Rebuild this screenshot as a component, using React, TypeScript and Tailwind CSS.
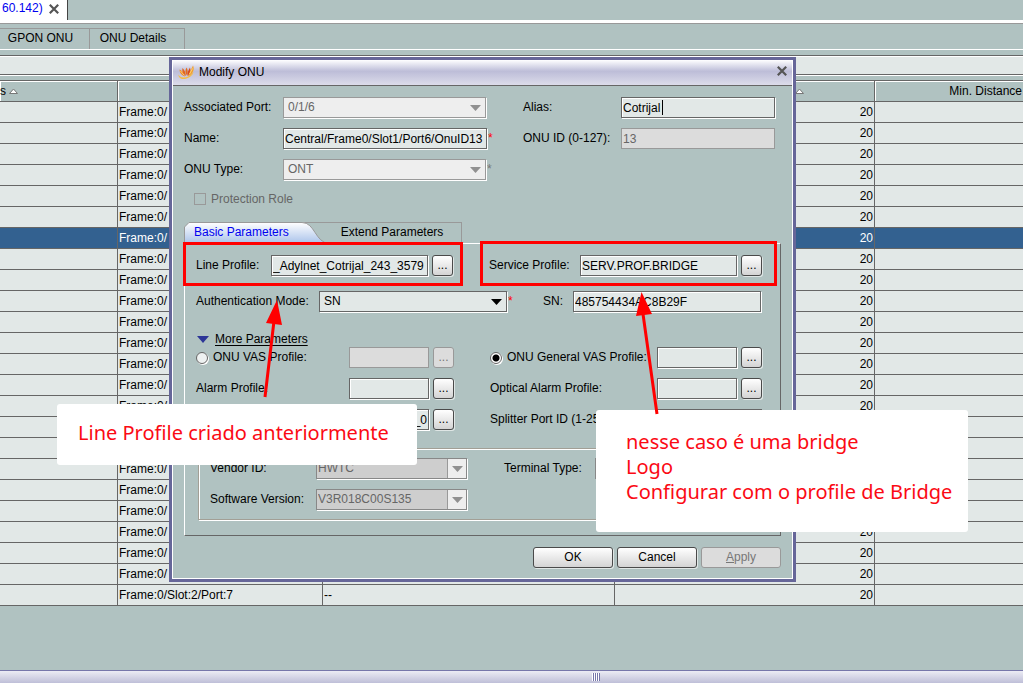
import { useEffect, useId, useRef, type ReactNode } from "react";

const field =
  "h-[21px] border border-[#666] bg-[#e2e8e7] px-px text-[12px] leading-[15px] text-black outline-none shadow-[inset_1px_1px_0_#fff,1px_1px_0_#fff]";
const fieldOff =
  "h-[21px] border border-[#999] bg-[#dcdcdc] px-px text-[12px] leading-[15px] text-[#666] outline-none";
const buttonOn =
  "rounded-[3px] border border-[#4a4a4a] bg-linear-to-b from-white to-[#d4d4d4] text-black shadow-[1px_1px_0_#dfe6e5]";
const buttonOff = "rounded-[3px] border border-[#999] bg-[#dcdcdc] text-[#777]";

type FieldProps = {
  label: ReactNode;
  labelWidth: string;
  width: string;
  value?: string;
  disabled?: boolean;
  caret?: boolean;
  required?: boolean;
  browse?: boolean;
};

function TextField({ label, labelWidth, width, value = "", disabled, caret, required, browse }: FieldProps) {
  const id = useId();
  const ref = useRef<HTMLInputElement>(null);
  useEffect(() => {
    if (ref.current) ref.current.scrollLeft = ref.current.scrollWidth;
  }, []);
  return (
    <div className="flex items-center">
      <label htmlFor={id} className={`${labelWidth} shrink-0 whitespace-nowrap`}>
        {label}
      </label>
      <div className="relative flex">
        <input
          ref={ref}
          id={id}
          defaultValue={value}
          disabled={disabled}
          className={`${width} ${disabled ? fieldOff : field}`}
        />
        {caret && <span className="absolute top-[3px] left-[41px] h-[15px] w-px bg-black" />}
      </div>
      {required && <Star />}
      {browse && <Browse disabled={disabled} />}
    </div>
  );
}

function Star({ muted }: { muted?: boolean }) {
  return <span className={`ml-px h-[15px] ${muted ? "text-[#777]" : "text-[#f00]"}`}>*</span>;
}

function Browse({ disabled }: { disabled?: boolean }) {
  return (
    <button
      aria-label="Browse"
      disabled={disabled}
      className={`ml-1 flex h-[21px] w-[21px] items-center justify-center text-[12px] leading-[15px] ${disabled ? buttonOff : buttonOn}`}
    >
      ...
    </button>
  );
}

type SelectProps = {
  label: string;
  labelWidth: string;
  width: string;
  value: string;
  look: "active" | "disabled" | "combo";
  star?: "red" | "gray";
};

function SelectField({ label, labelWidth, width, value, look, star }: SelectProps) {
  const id = useId();
  const tone =
    look === "active"
      ? "border-[#666] bg-[#e2e8e7] pl-1 text-black"
      : look === "combo"
        ? "border-[#888] bg-[#cecece] pl-px text-[#666]"
        : "border-[#999] bg-[#eee] pl-1 text-[#666]";
  return (
    <div className="flex items-center">
      <label htmlFor={id} className={`${labelWidth} shrink-0 whitespace-nowrap`}>
        {label}
      </label>
      <div className="relative flex">
        <select
          id={id}
          disabled={look !== "active"}
          className={`h-[21px] appearance-none border text-[12px] leading-[15px] opacity-100 shadow-[1px_1px_0_#fff] outline-none ${width} ${tone}`}
        >
          <option>{value}</option>
        </select>
        <span
          className={`pointer-events-none absolute top-px right-px flex h-[19px] w-[19px] items-center justify-center ${
            look === "combo" ? "border-l border-[#999] bg-[#eee]" : ""
          }`}
        >
          <svg width="11" height="6" viewBox="0 0 11 6" className={look === "active" ? "fill-black" : "fill-[#909090]"}>
            <path d="M0 0h11L5.5 6z" />
          </svg>
        </span>
      </div>
      {star && <Star muted={star === "gray"} />}
    </div>
  );
}

function Radio({ label, checked }: { label: string; checked?: boolean }) {
  return (
    <span className="flex items-center gap-[5px] whitespace-nowrap">
      <input
        type="radio"
        name="vas"
        aria-label={label}
        defaultChecked={checked}
        className="h-3 w-3 appearance-none rounded-full border border-[#666] bg-[#eef1f1] shadow-[1px_1px_0_#fff] checked:bg-[radial-gradient(circle,#000_0_3px,#fff_4px)]"
      />
      {label}
    </span>
  );
}

function CloseIcon() {
  return (
    <svg width="10" height="10" viewBox="0 0 10 10" className="stroke-[#555]" strokeWidth="2.2">
      <path d="M.8.8l8.4 8.4M9.2.8L.8 9.2" />
    </svg>
  );
}

function SortIcon() {
  return (
    <svg width="9" height="6" viewBox="0 0 9 6" className="inline-block fill-white stroke-[#777]">
      <path d="M.5 5.5h8L4.5 1z" />
    </svg>
  );
}

function FlameIcon() {
  return (
    <svg width="17" height="15" viewBox="0 0 17 15">
      <path d="M.5 9.500C0 13 4 15 8.500 13.500 12 12.500 15 10 15.500 7c-3 4-6.500 5.500-10 5.500-2.500 0-4-1-5-3z" fill="#f5bd45" />
      <path d="M15 .5c2 4-.5 9-5 11 .5-4 3-6 5-11z" fill="#f2a02e" />
      <path d="M1.500 4.500C4 5.500 6 8 7 11.500 4 10.500 1.500 8 1.500 4.500z" fill="#ee8a26" />
      <path d="M4.500 3c1.500 1.500 2.500 3 3 5.500L8 11 5 8.500C4.500 6.500 4 5 4.500 3z" fill="#e2641f" />
      <path d="M8.500 2.500c1.500 2 1.500 5 .5 8C7 8 7 5 8.500 2.500z" fill="#e56b1c" />
      <path d="M12 2.500c1 3 0 6-2.500 8.500C9 8 10.500 5 12 2.500z" fill="#d8481a" />
      <path d="M2.500 6l3.500 4M14.500 3.500L11.500 9" stroke="#ffdf8a" strokeWidth=".8" />
    </svg>
  );
}

function OnuTable() {
  const rows = Array.from({ length: 24 }, (_, i) => i);
  const cell = "h-[21px] overflow-hidden border-r border-b border-[#666] p-0 whitespace-nowrap leading-[15px]";
  const head = "h-[22px] border-t border-r border-b border-[#666] p-0 font-normal leading-[15px] shadow-[inset_1px_1px_0_#fff]";
  return (
    <table className="w-full table-fixed border-separate border-spacing-0">
      <colgroup>
        <col className="w-[118px]" />
        <col className="w-[205px]" />
        <col className="w-[292px]" />
        <col className="w-[260px]" />
        <col />
      </colgroup>
      <thead>
        <tr>
          <th className={`${head} text-left`}>
            s <SortIcon />
          </th>
          <th className={head} />
          <th className={head} />
          <th className={`${head} pr-[70px] text-right`}>
            <SortIcon />
          </th>
          <th className={`${head} border-r-0 pr-px text-right`}>Min. Distance</th>
        </tr>
      </thead>
      <tbody>
        {rows.map((i) => (
          <tr key={i} className={i === 6 ? "bg-[#336190] text-white" : "bg-[#e2e8e7]"}>
            <td className={cell} />
            <td className={`${cell} pl-px`}>{i === 23 ? "Frame:0/Slot:2/Port:7" : "Frame:0/"}</td>
            <td className={`${cell} pl-px`}>{i === 23 ? "--" : ""}</td>
            <td className={`${cell} pr-px text-right`}>20</td>
            <td className={`${cell} border-r-0`} />
          </tr>
        ))}
      </tbody>
    </table>
  );
}

function ModifyDialog() {
  const id = useId();
  return (
    <section
      role="dialog"
      aria-label="Modify ONU"
      className="absolute top-[57px] left-[169px] w-[627px] border-[3px] border-[#666699] bg-[#b0c2c1] shadow-[inset_1px_1px_0_#fff,inset_-1px_-1px_0_#fff]"
    >
      <header className="mx-px flex h-[26px] items-center border-b border-[#666] bg-linear-to-b from-[#fff] via-[#bdbdd8] via-45% to-[#dcdcea] px-[5px]">
        <FlameIcon />
        <h1 className="ml-1 flex-1">Modify ONU</h1>
        <button aria-label="Close" className="mb-1">
          <CloseIcon />
        </button>
      </header>

      <div className="px-3 pt-[11px] pb-[11px]">
        <div className="grid grid-cols-[339px_1fr] gap-y-[10px]">
          <SelectField label="Associated Port:" labelWidth="w-[99px]" width="w-[203px]" value="0/1/6" look="disabled" />
          <TextField label="Alias:" labelWidth="w-[98px]" width="w-[154px]" value="Cotrijal" caret />
          <TextField
            label="Name:"
            labelWidth="w-[99px]"
            width="w-[204px]"
            value="Central/Frame0/Slot1/Port6/OnuID13"
            required
          />
          <TextField label="ONU ID (0-127):" labelWidth="w-[98px]" width="w-[154px]" value="13" disabled />
          <SelectField
            label="ONU Type:"
            labelWidth="w-[99px]"
            width="w-[203px]"
            value="ONT"
            look="disabled"
            star="gray"
          />
        </div>

        <div className="mt-3 flex h-[14px] items-center gap-[5px] pl-[10px] text-[#666]">
          <input
            id={id}
            type="checkbox"
            disabled
            className="h-3 w-3 appearance-none border border-[#999] bg-transparent"
          />
          <label htmlFor={id}>Protection Role</label>
        </div>

        <div role="tablist" className="mt-4 flex h-[21px]">
          <button role="tab" aria-selected="true" className="relative h-[21px] w-[140px] text-[#0000f0]">
            <svg viewBox="0 0 146 21" width="146" height="21" className="absolute top-0 left-0">
              <defs>
                <linearGradient id="tab" x1="0" y1="0" x2="0" y2="1">
                  <stop offset="0" stopColor="#fff" />
                  <stop offset="1" stopColor="#a9c2ea" />
                </linearGradient>
              </defs>
              <path d="M118 .5h28" stroke="#999" />
              <path d="M.5 21.500V5L5 .5h113c13 0 13 20 27 21z" fill="url(#tab)" stroke="#999" />
            </svg>
            <span className="relative block pl-[10px] text-left">Basic Parameters</span>
          </button>
          <button role="tab" aria-selected="false" className="h-[21px] w-[138px] border-t border-r border-[#999] pr-px pb-px">
            Extend Parameters
          </button>
        </div>

        <div className="border border-t-white border-r-[#666] border-b-[#666] border-l-white pt-[11px] pb-[15px]">
          <div className="grid grid-cols-[293px_1fr] pl-[11px]">
            <TextField
              label="Line Profile:"
              labelWidth="w-[75px]"
              width="w-[157px]"
              value="_Adylnet_Cotrijal_243_3579"
              browse
            />
            <TextField label="Service Profile:" labelWidth="w-[91px]" width="w-[157px]" value="SERV.PROF.BRIDGE" browse />
          </div>

          <div className="mt-[15px] grid grid-cols-[347px_1fr] pl-[11px]">
            <SelectField
              label="Authentication Mode:"
              labelWidth="w-[123px]"
              width="w-[188px]"
              value="SN"
              look="active"
              star="red"
            />
            <TextField label="SN:" labelWidth="w-[30px]" width="w-[188px]" value="485754434AC8B29F" />
          </div>

          <button className="mt-5 ml-3 flex h-[15px] items-center gap-[6px]">
            <svg width="12" height="7" viewBox="0 0 12 7" className="fill-[#2c3597]">
              <path d="M0 0h12L6 7z" />
            </svg>
            <span className="underline underline-offset-2">More Parameters</span>
          </button>

          <div className="grid grid-cols-[294px_1fr] gap-y-[10px] pl-[11px]">
            <TextField label={<Radio label="ONU VAS Profile:" />} labelWidth="w-[153px]" width="w-[80px]" disabled browse />
            <TextField
              label={<Radio label="ONU General VAS Profile:" checked />}
              labelWidth="w-[167px]"
              width="w-[80px]"
              browse
            />
            <TextField label="Alarm Profile:" labelWidth="w-[153px]" width="w-[80px]" browse />
            <TextField label="Optical Alarm Profile:" labelWidth="w-[167px]" width="w-[80px]" browse />
            <TextField label="" labelWidth="w-[153px]" width="w-[80px]" value="alarm-profile_0" browse />
            <TextField label="Splitter Port ID (1-256):" labelWidth="w-[167px]" width="w-[105px]" />
          </div>

          <div className="mx-[13px] mt-[18px] border border-[#a29f96] p-px shadow-[inset_1px_1px_0_#fff,1px_1px_0_#fff]">
            <div className="grid grid-cols-[294px_1fr] gap-y-[10px] pt-2 pb-[8px] pl-[10px]">
              <SelectField label="Vendor ID:" labelWidth="w-[106px]" width="w-[151px]" value="HWTC" look="combo" />
              <SelectField label="Terminal Type:" labelWidth="w-[91px]" width="w-[151px]" value="" look="combo" />
              <SelectField
                label="Software Version:"
                labelWidth="w-[106px]"
                width="w-[151px]"
                value="V3R018C00S135"
                look="combo"
              />
            </div>
          </div>
        </div>

        <div className="mt-[11px] flex justify-end gap-1">
          <button className={`h-[21px] w-20 ${buttonOn}`}>OK</button>
          <button className={`h-[21px] w-20 ${buttonOn}`}>Cancel</button>
          <button disabled className={`h-[21px] w-20 ${buttonOff}`}>
            <span className="underline">A</span>pply
          </button>
        </div>
      </div>
    </section>
  );
}

function Annotations() {
  const note = "absolute rounded-[3px] bg-white font-['Noto_Sans',sans-serif] text-[20px] leading-[25px] text-[#fb0a14]";
  return (
    <>
      <div className="pointer-events-none absolute top-[242px] left-[183px] h-[44px] w-[280px] border-[3px] border-[#f00]" />
      <div className="pointer-events-none absolute top-[241px] left-[480px] h-[45px] w-[297px] border-[3px] border-[#f00]" />
      <p className={`${note} top-[404px] left-[57px] h-[61px] w-[360px] pt-4 pl-[21px] whitespace-nowrap`}>
        Line Profile criado anteriormente
      </p>
      <div className={`${note} top-[410px] left-[596px] h-[122px] w-[372px] pt-[19px] pl-[30px] whitespace-nowrap`}>
        <p>nesse caso é uma bridge</p>
        <p>Logo</p>
        <p>Configurar com o profile de Bridge</p>
      </div>
      <svg
        width="400"
        height="126"
        viewBox="262 290 400 126"
        className="pointer-events-none absolute top-[290px] left-[262px] fill-[#f00] stroke-[#f00]"
      >
        <path d="M265 397l9-76M657 414l-14-100" strokeWidth="3" />
        <path d="M277 300l-11 23 16 2zM641.500 292l-5.500 24 16-2z" stroke="none" />
      </svg>
    </>
  );
}

export default function App() {
  return (
    <main className="relative flex min-h-screen flex-col overflow-hidden bg-[#b0c2c1] font-['Liberation_Sans',Arial,sans-serif] text-[12px] leading-[15px] text-black">
      <div className="flex h-5 items-stretch">
        <div className="flex w-[68px] items-center gap-[6px] border-r border-[#444] bg-white pb-[3px] pl-[2px] text-[#0000f0]">
          60.142)
          <button aria-label="Close tab">
            <CloseIcon />
          </button>
        </div>
      </div>
      <div className="h-1 border-b border-[#999] bg-white" />

      <nav className="mt-1 flex h-[22px] border-b border-white">
        <button className="w-[90px] border-t border-r border-[#999] pr-2 pb-px">GPON ONU</button>
        <button className="w-[95px] border-t border-r border-[#999] pr-2 pb-px">ONU Details</button>
      </nav>

      <div className="mt-[5px] h-5 border-t border-b border-[#666] bg-[#e2e8e7] shadow-[inset_0_1px_0_#fff,0_1px_0_#fff]" />
      <div className="mt-[5px]">
        <OnuTable />
      </div>

      <footer className="mt-auto flex h-[14px] items-center justify-center border-t border-b border-t-[#7777aa] border-b-white bg-linear-to-b from-[#ececf4] to-[#bfbfd8] pl-[168px]">
        <span className="h-2 w-2 bg-[repeating-linear-gradient(90deg,#fff_0_1px,#7777aa_1px_2px)]" />
      </footer>

      <ModifyDialog />
      <Annotations />
    </main>
  );
}
